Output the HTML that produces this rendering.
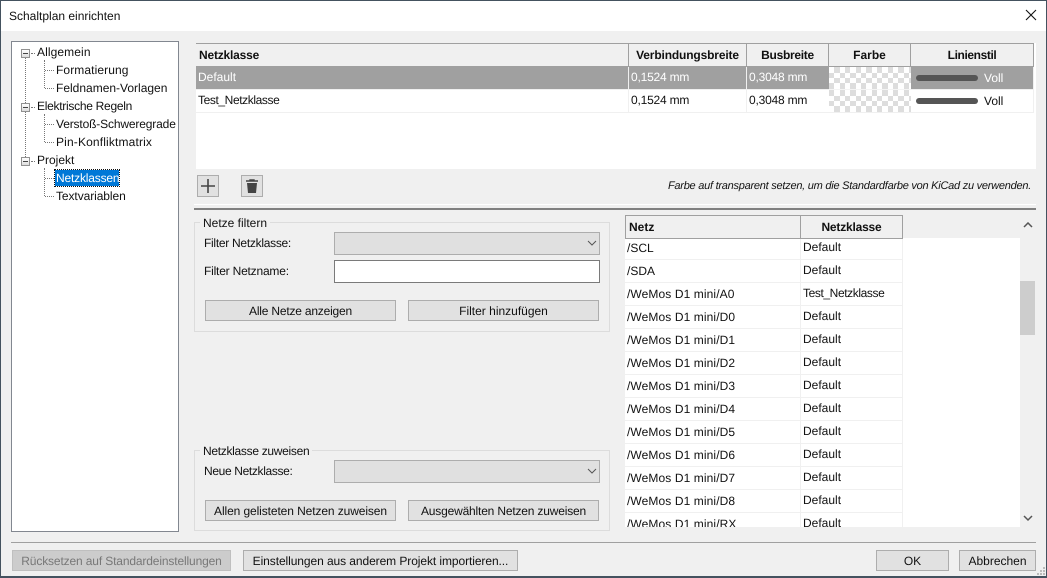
<!DOCTYPE html>
<html><head><meta charset="utf-8"><style>
html,body{margin:0;padding:0}
body{width:1047px;height:578px;overflow:hidden;position:relative;background:#f0f0f0;font:12px/16px "Liberation Sans",sans-serif;color:#111;text-rendering:geometricPrecision}
div,span{position:absolute;box-sizing:border-box}
.t{white-space:nowrap;height:16px}
.btn{background:#e1e1e1;border:1px solid #adadad;text-align:center;line-height:20px;white-space:nowrap}
.combo{background:#e0e0e0;border:1px solid #adadad}
.group{border:1px solid #dcdcdc}
.hd{background:#f0f0f0;border-right:1px solid #a0a0a0;border-bottom:1px solid #a0a0a0;border-top:1px solid #a0a0a0;text-align:center;font-weight:bold;line-height:22px;white-space:nowrap}
.l{background:#f0f0f0}
.row{left:0;width:278px;height:1px;background:#f0f0f0}
.dot{border-left:1px dotted #777}
.dh{border-top:1px dotted #777;height:1px}
.pm{width:9px;height:9px;border:1px solid #919191;background:linear-gradient(#fff,#ddd)}
.pm:after{content:"";position:absolute;left:1px;top:3px;width:5px;height:1px;background:#444}
.w{letter-spacing:.1px}
.n{letter-spacing:-.2px}
.c{letter-spacing:-.4px}
</style></head><body>

<div style="left:0;top:0;width:1047px;height:578px;border:1px solid #44525f;border-width:1px 1px 2px 1px;z-index:9;pointer-events:none"></div>
<div style="left:1px;top:1px;width:1045px;height:30px;background:#fff"></div>
<div class="t" style="left:9px;top:8px">Schaltplan einrichten</div>
<svg style="position:absolute;left:1025px;top:9px" width="12" height="12"><path d="M1 1L11 11M11 1L1 11" stroke="#111" stroke-width="1.1" fill="none"/></svg>

<!-- tree -->
<div style="left:11px;top:41px;width:168px;height:491px;background:#fff;border:1px solid #828790"></div>
<div class="dot" style="left:25px;top:58px;height:99px;width:1px"></div>
<div class="dot" style="left:44px;top:60px;height:28px;width:1px"></div>
<div class="dot" style="left:44px;top:114px;height:28px;width:1px"></div>
<div class="dot" style="left:44px;top:168px;height:28px;width:1px"></div>
<div class="dh" style="left:31px;top:53px;width:4px"></div>
<div class="dh" style="left:31px;top:107px;width:4px"></div>
<div class="dh" style="left:31px;top:161px;width:4px"></div>
<div class="dh" style="left:45px;top:70px;width:9px"></div>
<div class="dh" style="left:45px;top:88px;width:9px"></div>
<div class="dh" style="left:45px;top:124px;width:9px"></div>
<div class="dh" style="left:45px;top:142px;width:9px"></div>
<div class="dh" style="left:45px;top:178px;width:9px"></div>
<div class="dh" style="left:45px;top:196px;width:9px"></div>
<div class="pm" style="left:21px;top:49px"></div>
<div class="pm" style="left:21px;top:103px"></div>
<div class="pm" style="left:21px;top:157px"></div>
<div class="t" style="left:37px;top:44px;letter-spacing:.1px">Allgemein</div>
<div class="t" style="left:56px;top:62px;letter-spacing:.1px">Formatierung</div>
<div class="t" style="left:56px;top:80px">Feldnamen-Vorlagen</div>
<div class="t" style="left:37px;top:98px;letter-spacing:-.28px">Elektrische Regeln</div>
<div class="t" style="left:56px;top:116px;letter-spacing:-.15px">Verstoß-Schweregrade</div>
<div class="t" style="left:56px;top:134px;letter-spacing:.15px">Pin-Konfliktmatrix</div>
<div class="t" style="left:37px;top:152px">Projekt</div>
<div style="left:55px;top:170px;width:64px;height:16px;background:#0078d7;outline:1px dotted #111"></div>
<div class="t" style="left:56px;top:170px;color:#fff;letter-spacing:-.18px">Netzklassen</div>
<div class="t" style="left:56px;top:188px;letter-spacing:-.08px">Textvariablen</div>

<!-- net class table -->
<div style="left:196px;top:43px;width:840px;height:126px;background:#fff"></div>
<div class="hd n" style="left:196px;top:43px;width:433px;height:24px;text-align:left;padding-left:3px">Netzklasse</div>
<div class="hd" style="left:629px;top:43px;width:118px;height:24px;letter-spacing:-.15px">Verbindungsbreite</div>
<div class="hd" style="left:747px;top:43px;width:82px;height:24px;letter-spacing:-.3px">Busbreite</div>
<div class="hd" style="left:829px;top:43px;width:82px;height:24px">Farbe</div>
<div class="hd c" style="left:911px;top:43px;width:123px;height:24px">Linienstil</div>
<div style="left:196px;top:67px;width:838px;height:23px;background:#a0a0a0"></div>
<div style="left:196px;top:112px;width:838px;height:1px;background:#f0f0f0"></div>
<div style="left:628px;top:67px;width:1px;height:46px;background:#f0f0f0"></div>
<div style="left:746px;top:67px;width:1px;height:46px;background:#f0f0f0"></div>
<div style="left:1033px;top:67px;width:1px;height:46px;background:#f0f0f0"></div>
<div style="left:829px;top:67px;width:82px;height:22px;background:#fff"></div>
<svg style="position:absolute;left:829px;top:67px" width="82" height="22" shape-rendering="crispEdges"><path fill="#ddd" fill-rule="evenodd" d="M5 0h6v22h-6zM16 0h5v22h-5zM27 0h5v22h-5zM37 0h6v22h-6zM48 0h5v22h-5zM59 0h5v22h-5zM69 0h6v22h-6zM80 0h2v22h-2zM0 6h82v5h-82zM0 16h82v6h-82z"/></svg>
<div style="left:829px;top:90px;width:82px;height:22px;background:#fff"></div>
<svg style="position:absolute;left:829px;top:90px" width="82" height="22" shape-rendering="crispEdges"><path fill="#ddd" fill-rule="evenodd" d="M0 0h82v22h-82zM5 0h6v22h-6zM16 0h5v22h-5zM27 0h5v22h-5zM37 0h6v22h-6zM48 0h5v22h-5zM59 0h5v22h-5zM69 0h6v22h-6zM80 0h2v22h-2zM0 6h82v5h-82zM0 16h82v6h-82z"/></svg>
<div style="left:196px;top:89px;width:633px;height:1px;background:#f0f0f0"></div>
<div style="left:829px;top:89px;width:82px;height:1px;background:#f4f4f4"></div>
<div style="left:911px;top:89px;width:123px;height:1px;background:#f0f0f0"></div>
<div class="t" style="left:198px;top:69px;color:#fff">Default</div>
<div class="t n" style="left:631px;top:69px;color:#fff">0,1524 mm</div>
<div class="t n" style="left:749px;top:69px;color:#fff">0,3048 mm</div>
<div style="left:916px;top:75px;width:62px;height:6px;border-radius:3px;background:#555"></div>
<div class="t" style="left:984px;top:70px;color:#fff">Voll</div>
<div class="t c" style="left:198px;top:92px">Test_Netzklasse</div>
<div class="t n" style="left:631px;top:92px">0,1524 mm</div>
<div class="t n" style="left:749px;top:92px">0,3048 mm</div>
<div style="left:916px;top:98px;width:62px;height:6px;border-radius:3px;background:#555"></div>
<div class="t" style="left:984px;top:93px">Voll</div>

<!-- tool buttons -->
<div style="left:197px;top:175px;width:22px;height:22px;background:#e1e1e1;border:1px solid #adadad"></div>
<svg style="position:absolute;left:197px;top:175px" width="22" height="22"><path d="M11 4V18M4 11H18" stroke="#444" stroke-width="1.6" fill="none"/></svg>
<div style="left:241px;top:175px;width:22px;height:22px;background:#e1e1e1;border:1px solid #adadad"></div>
<svg style="position:absolute;left:241px;top:175px" width="22" height="22"><path d="M5 6H17M9 6V5H13V6" stroke="#444" stroke-width="1.4" fill="none"/><path d="M6 8H16L15 18H7Z" fill="#444"/></svg>
<div class="t" style="right:16px;top:178px;font-style:italic;font-size:11px;letter-spacing:-.25px">Farbe auf transparent setzen, um die Standardfarbe von KiCad zu verwenden.</div>

<div style="left:194px;top:204px;width:842px;height:1px;background:#fff"></div>
<div style="left:194px;top:208px;width:842px;height:2px;background:#808080"></div>

<!-- filter group -->
<div class="group" style="left:194px;top:222px;width:416px;height:110px"></div>
<div class="t l" style="left:200px;top:215px;padding:0 3px">Netze filtern</div>
<div class="t" style="left:204px;top:235px;letter-spacing:-.28px">Filter Netzklasse:</div>
<div class="combo" style="left:334px;top:232px;width:266px;height:23px"></div>
<svg style="position:absolute;left:587px;top:240px" width="10" height="7"><path d="M1 1L5 5L9 1" stroke="#555" fill="none"/></svg>
<div class="t n" style="left:204px;top:263px">Filter Netzname:</div>
<div style="left:334px;top:260px;width:266px;height:23px;background:#fff;border:1px solid #7a7a7a"></div>
<div class="btn n" style="left:205px;top:300px;width:191px;height:21px">Alle Netze anzeigen</div>
<div class="btn" style="left:408px;top:300px;width:191px;height:21px">Filter hinzufügen</div>

<!-- assign group -->
<div class="group" style="left:194px;top:450px;width:416px;height:81px"></div>
<div class="t l" style="left:200px;top:443px;padding:0 3px;letter-spacing:-.3px">Netzklasse zuweisen</div>
<div class="t" style="left:204px;top:463px;letter-spacing:-.35px">Neue Netzklasse:</div>
<div class="combo" style="left:334px;top:460px;width:266px;height:23px"></div>
<svg style="position:absolute;left:587px;top:468px" width="10" height="7"><path d="M1 1L5 5L9 1" stroke="#555" fill="none"/></svg>
<div class="btn" style="left:205px;top:500px;width:191px;height:21px;letter-spacing:-.1px">Allen gelisteten Netzen zuweisen</div>
<div class="btn" style="left:408px;top:500px;width:191px;height:21px;letter-spacing:-.18px">Ausgewählten Netzen zuweisen</div>

<!-- net grid -->
<div style="left:625px;top:238px;width:395px;height:289px;background:#fff;overflow:hidden">
<div class="row" style="top:21px"></div><div class="row" style="top:44px"></div><div class="row" style="top:67px"></div><div class="row" style="top:90px"></div><div class="row" style="top:113px"></div><div class="row" style="top:136px"></div><div class="row" style="top:159px"></div><div class="row" style="top:182px"></div><div class="row" style="top:205px"></div><div class="row" style="top:228px"></div><div class="row" style="top:251px"></div><div class="row" style="top:274px"></div>
<div style="left:175px;top:0;width:1px;height:289px;background:#f0f0f0"></div>
<div style="left:277px;top:0;width:1px;height:289px;background:#f0f0f0"></div>
<div class="t" style="left:2px;top:2px">/SCL</div><div class="t" style="left:178px;top:1px">Default</div>
<div class="t" style="left:2px;top:25px">/SDA</div><div class="t" style="left:178px;top:24px">Default</div>
<div class="t w" style="left:2px;top:48px">/WeMos D1 mini/A0</div><div class="t c" style="left:178px;top:47px">Test_Netzklasse</div>
<div class="t w" style="left:2px;top:71px">/WeMos D1 mini/D0</div><div class="t" style="left:178px;top:70px">Default</div>
<div class="t w" style="left:2px;top:94px">/WeMos D1 mini/D1</div><div class="t" style="left:178px;top:93px">Default</div>
<div class="t w" style="left:2px;top:117px">/WeMos D1 mini/D2</div><div class="t" style="left:178px;top:116px">Default</div>
<div class="t w" style="left:2px;top:140px">/WeMos D1 mini/D3</div><div class="t" style="left:178px;top:139px">Default</div>
<div class="t w" style="left:2px;top:163px">/WeMos D1 mini/D4</div><div class="t" style="left:178px;top:162px">Default</div>
<div class="t w" style="left:2px;top:186px">/WeMos D1 mini/D5</div><div class="t" style="left:178px;top:185px">Default</div>
<div class="t w" style="left:2px;top:209px">/WeMos D1 mini/D6</div><div class="t" style="left:178px;top:208px">Default</div>
<div class="t w" style="left:2px;top:232px">/WeMos D1 mini/D7</div><div class="t" style="left:178px;top:231px">Default</div>
<div class="t w" style="left:2px;top:255px">/WeMos D1 mini/D8</div><div class="t" style="left:178px;top:254px">Default</div>
<div class="t w" style="left:2px;top:278px">/WeMos D1 mini/RX</div><div class="t" style="left:178px;top:277px">Default</div>
</div>
<div class="hd" style="left:625px;top:215px;width:176px;height:24px;text-align:left;padding-left:3px;border-left:1px solid #a0a0a0">Netz</div>
<div class="hd n" style="left:801px;top:215px;width:102px;height:24px">Netzklasse</div>

<!-- scrollbar -->
<div style="left:1020px;top:281px;width:15px;height:54px;background:#cdcdcd"></div>
<svg style="position:absolute;left:1023px;top:222px" width="10" height="7"><path d="M1 5L5 1L9 5" stroke="#555" stroke-width="1.5" fill="none"/></svg>
<svg style="position:absolute;left:1023px;top:515px" width="10" height="7"><path d="M1 1L5 5L9 1" stroke="#555" stroke-width="1.5" fill="none"/></svg>

<!-- footer -->
<div style="left:11px;top:542px;width:1025px;height:1px;background:#a0a0a0"></div>
<div class="btn" style="left:12px;top:550px;width:219px;height:21px;background:#ccc;border-color:#bfbfbf;color:#787878;letter-spacing:-.14px">Rücksetzen auf Standardeinstellungen</div>
<div class="btn" style="left:243px;top:550px;width:275px;height:21px;letter-spacing:-.08px">Einstellungen aus anderem Projekt importieren...</div>
<div class="btn" style="left:876px;top:550px;width:73px;height:21px">OK</div>
<div class="btn" style="left:959px;top:550px;width:77px;height:21px">Abbrechen</div>
<svg style="position:absolute;left:1037px;top:566px" width="9" height="10"><path d="M6 1h2v2h-2zM3 4h2v2h-2zM6 4h2v2h-2zM0 7h2v2h-2zM3 7h2v2h-2zM6 7h2v2h-2z" fill="#bbb"/></svg>
</body></html>
